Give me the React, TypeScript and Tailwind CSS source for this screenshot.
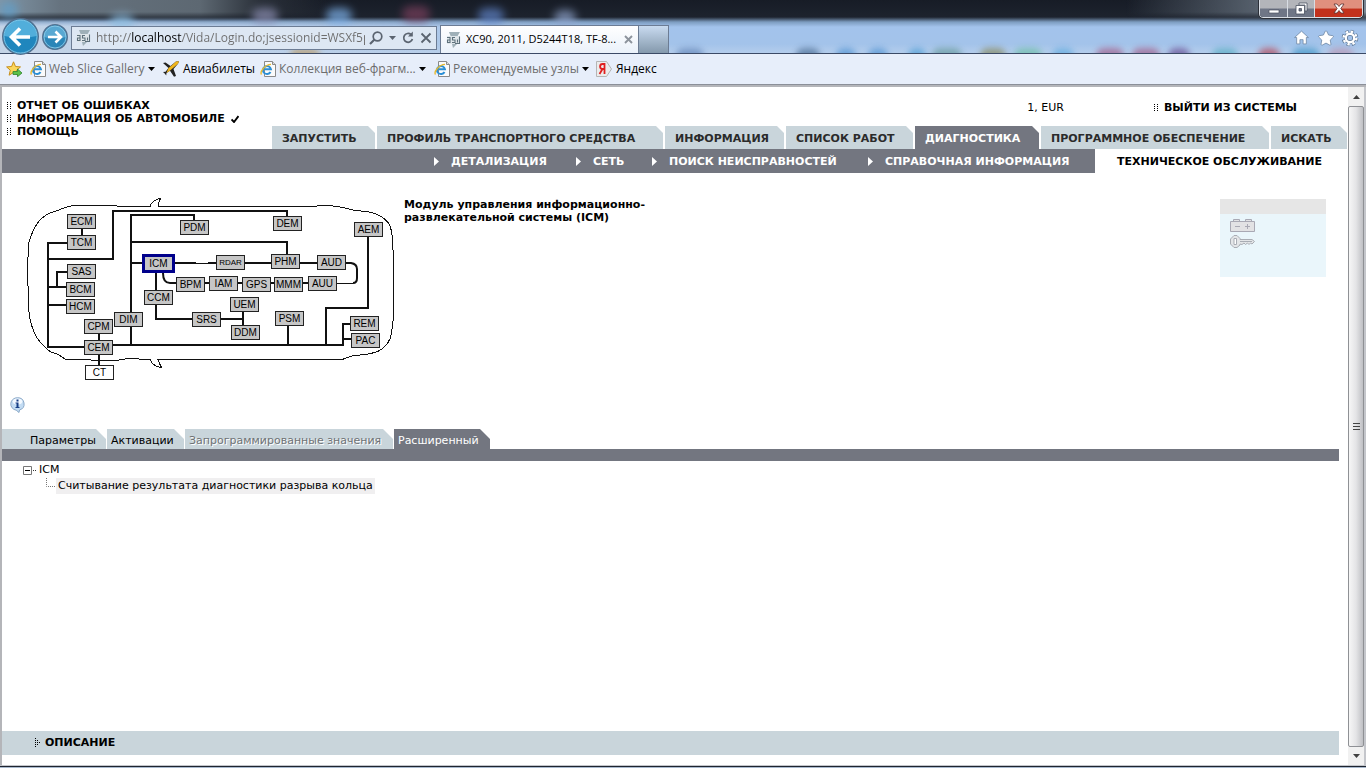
import React from "react";
import clsx from "clsx";
import { IoMdHome } from "react-icons/io";
import { FaStar } from "react-icons/fa";

const blobs = [
  { x: 0, y: 2, w: 18, color: "#5f9fcb" },
  { x: 110, y: 14, w: 24, color: "#8fbfe2" },
  { x: 252, y: 8, w: 26, color: "#8d90b4" },
  { x: 326, y: 8, w: 26, color: "#7fb4ee" },
  { x: 402, y: 6, w: 28, color: "#7a3f5c" },
  { x: 478, y: 8, w: 26, color: "#5f83c8" },
  { x: 554, y: 10, w: 22, color: "#8fa4cc" },
];

const lowBlobs = [
  { x: 290, w: 30, color: "#b9a27c" },
  { x: 676, w: 28, color: "#6d8fc0" },
  { x: 796, w: 24, color: "#56789f" },
  { x: 836, w: 20, color: "#5c9ad6" },
  { x: 868, w: 20, color: "#5c9ad6" },
  { x: 908, w: 18, color: "#5aa3d8" },
  { x: 932, w: 30, color: "#6f9fa6" },
  { x: 980, w: 26, color: "#8a9070" },
  { x: 1014, w: 28, color: "#74bfae" },
  { x: 1052, w: 22, color: "#6aaee0" },
  { x: 1096, w: 28, color: "#a06a96" },
  { x: 1132, w: 28, color: "#a06a96" },
  { x: 1168, w: 22, color: "#6e5a9c" },
  { x: 1212, w: 26, color: "#62b0c8" },
  { x: 1258, w: 22, color: "#b0566a" },
  { x: 1292, w: 28, color: "#4c9ccc" },
  { x: 1328, w: 26, color: "#b59ab8" },
];

const Caret = ({ className }: { className?: string }) => (
  <svg viewBox="0 0 7 4" className={clsx("h-1 w-[7px] shrink-0", className)}>
    <path d="M0 0h7L3.5 4z" fill="currentColor" />
  </svg>
);

const AsiIcon = () => (
  <svg viewBox="0 0 15 16" className="h-4 w-[15px] shrink-0">
    <path d="M3 0h11l-3 5H5z" fill="#9fb0b8" />
    <path d="M1 4h13v8h-4l-3 4v-4H1z" fill="#dfe6ea" />
    <path d="M6 12h5l-4 4z" fill="#9fb0b8" />
    <path
      d="M1 5.500h3v5H1.500v-2.500H4M9 5.500H6.500V8H9v2.500H6M11.500 7.500v3M13.500 4.500v7H9"
      fill="none"
      stroke="#5d707b"
      strokeWidth="1.100"
    />
  </svg>
);

const IePageIcon = () => (
  <svg viewBox="0 0 16 16" className="size-4 shrink-0">
    <path d="M4.500.5h8l3 3v12h-11z" fill="#fbfbfb" stroke="#8a8a8a" />
    <path d="M12.500.5v3h3" fill="#ddd" stroke="#8a8a8a" />
    <path
      d="M10.500 11a4 4 0 1 1 .4-2.800H4.500"
      fill="none"
      stroke="#2b8fd6"
      strokeWidth="2"
    />
    <path
      d="M1.500 13.500C-.5 11 5 3.500 11 3.300"
      fill="none"
      stroke="#e9b92c"
      strokeWidth="1.300"
    />
  </svg>
);

const AddFavoriteIcon = () => (
  <svg viewBox="0 0 17 16" className="h-4 w-[17px] shrink-0">
    <path
      d="M7.500.8l2 4.700 5 .4-3.800 3.300 1.200 5-4.400-2.700-4.400 2.700 1.200-5L.6 5.900l5-.4z"
      fill="#fbd65a"
      stroke="#c78f1c"
    />
    <path
      d="M7 10.500h4.500V8l4.500 4-4.500 3.700V13.500H7z"
      fill="#5cc24a"
      stroke="#2e8430"
      strokeWidth=".8"
    />
  </svg>
);

const PlaneIcon = () => (
  <svg viewBox="0 0 16 16" className="size-4 shrink-0">
    <path d="M0 2l2.500-.5 5 3.500L13 .5l3-.2-1 2.500L10.500 8l2.500 7-2 .8-4-6L3.500 12l-.3 2.500-1.500-2L0 11l2.500-.3L5.500 7z" fill="#222" />
    <path d="M8 5L13 .5l3-.2-1 2.500L6.500 10 3.500 12 5.500 7z" fill="#f0b51c" />
  </svg>
);

const YandexIcon = () => (
  <svg viewBox="0 0 16 16" className="size-4 shrink-0">
    <path d="M.5.5h10l5 7.500-5 7.500H.5z" fill="#ececec" stroke="#b5b5b5" />
    <path
      d="M8.500 13V3H6.500C3.300 3 3.300 8 6.500 8h2M6.500 8l-3 5"
      fill="none"
      stroke="#e02020"
      strokeWidth="1.800"
    />
  </svg>
);

const bookmarks = [
  { label: "Web Slice Gallery", icon: <IePageIcon />, menu: true, width: "w-[133px]", gap: "gap-[3px]" },
  { label: "Авиабилеты", icon: <PlaneIcon />, menu: false, width: "w-[97px]", gap: "gap-1" },
  { label: "Коллекция веб-фрагм...", icon: <IePageIcon />, menu: true, width: "w-[174px]", gap: "gap-[3px]" },
  { label: "Рекомендуемые узлы", icon: <IePageIcon />, menu: true, width: "w-[162px]", gap: "gap-[3px]" },
  { label: "Яндекс", icon: <YandexIcon />, menu: false, width: "w-[70px]", gap: "gap-1" },
];

const BrowserChrome = () => {
  return (
    <header className="font-['Open_Sans','Noto_Sans',sans-serif] text-xs">
      <div className="relative isolate border-b border-[#3b4a66]">
        {/* glass background */}
        <div className="absolute inset-0 -z-10 overflow-hidden bg-[linear-gradient(180deg,#171c26_0px,#1d232e_17px,#7d9cc0_22px,#a3c3ec_27px,#a3c3ea_44px,#b4cdec_53px)]">
          <div className="absolute inset-x-0 top-0 h-5 bg-[linear-gradient(90deg,#7f95a6_0px,#66737f_60px,#5d6872_200px,#2a3039_260px,transparent_330px,transparent_calc(100%-240px),#56606c_calc(100%-110px),#7b8794_100%)] mask-b-from-60%" />
          <div className="absolute top-[20px] left-0 h-[33px] w-[640px] bg-[linear-gradient(90deg,#c3d3e6,transparent)] mask-t-from-80%" />
          {blobs.map((b) => (
            <span
              key={b.x}
              className="absolute h-4 rounded-full opacity-70 blur-[4px]"
              style={{ left: b.x, top: b.y, width: b.w, background: b.color }}
            />
          ))}
          {lowBlobs.map((b) => (
            <span
              key={b.x}
              className="absolute top-[48px] h-4 rounded-t-lg opacity-80 blur-[3px]"
              style={{ left: b.x, width: b.w, background: b.color }}
            />
          ))}
        </div>

        <div className="flex h-5 items-start justify-end pr-[3px]">
          <div className="flex h-[18px] overflow-hidden rounded-b-[4px] border border-t-0 border-[#d8dde4] outline outline-[#2c3038]">
            <button aria-label="Свернуть" className="flex w-7 items-center justify-center border-r border-[#d8dde4] bg-linear-to-b from-[#b3b5ba] from-45% to-[#6f7686] to-55%">
              <svg viewBox="0 0 12 12" className="mt-1 size-3">
                <path d="M1 5h10v3H1z" fill="#fff" stroke="#4a5260" strokeWidth=".7" />
              </svg>
            </button>
            <button aria-label="Восстановить" className="flex w-[27px] items-center justify-center border-r border-[#d8dde4] bg-linear-to-b from-[#b3b5ba] from-45% to-[#6f7686] to-55%">
              <svg viewBox="0 0 13 13" className="size-[13px]">
                <path d="M4 1h8v8h-2V3H4z" fill="#fff" stroke="#4a5260" strokeWidth=".8" />
                <path d="M1 3.500h8.500V12H1zM4 6.500V9h2.500V6.500z" fill="#fff" fillRule="evenodd" stroke="#4a5260" strokeWidth=".8" />
              </svg>
            </button>
            <button aria-label="Закрыть" className="flex w-[47px] items-center justify-center bg-linear-to-b from-[#e0907e] from-45% to-[#c2311c] to-55%">
              <svg viewBox="0 0 12 11" className="h-[11px] w-3">
                <path d="M1 1h3l2 2.500L8 1h3L7.800 5.500 11 10H8L6 7.500 4 10H1l3.200-4.500z" fill="#fff" stroke="#5a3030" strokeWidth=".8" />
              </svg>
            </button>
          </div>
        </div>

        <div className="flex h-[33px] items-center">
          <div className="flex w-[71px] items-center gap-[3px] pl-[2px]">
            <button aria-label="Назад" className="shrink-0">
              <svg viewBox="0 0 37 37" className="size-[37px]">
                <circle cx="18.500" cy="18.500" r="17.800" fill="#1f86bd" stroke="#54718f" strokeWidth="1.400" />
                <path d="M2.500 18a16 16 0 0 1 32 0q-16 4-32 0z" fill="#51aedb" />
                <circle cx="18.500" cy="18.500" r="16.500" fill="none" stroke="#8fd0ee" strokeWidth=".8" />
                <path d="M28 19H9.500M18 10.500L9.500 19l8.500 8.500" fill="none" stroke="#fff" strokeWidth="3.600" />
              </svg>
            </button>
            <button aria-label="Вперед" className="shrink-0">
              <svg viewBox="0 0 26 26" className="size-[26px]">
                <circle cx="13" cy="13" r="12.300" fill="#2b86b8" stroke="#54718f" strokeWidth="1.300" />
                <path d="M2 13a11 11 0 0 1 22 0q-11 3-22 0z" fill="#58a8d2" />
                <circle cx="13" cy="13" r="11" fill="none" stroke="#9bd3ec" strokeWidth=".8" />
                <path d="M6 13h13M13.500 7.500L19 13l-5.500 5.500" fill="none" stroke="#fff" strokeWidth="2.600" />
              </svg>
            </button>
          </div>

          <div className="mt-[2px] flex h-6 w-[366px] items-center border border-[#6c7c94] bg-[#dde7f3] pr-1 pl-1">
            <AsiIcon />
            <input
              aria-label="Адрес"
              readOnly
              value="http://localhost/Vida/Login.do;jsessionid=WSXf5p8E"
              className="ml-[5px] w-[269px] bg-[linear-gradient(90deg,#6d6d6d_36px,#000_36px,#000_86px,#6d6d6d_86px)] bg-clip-text text-transparent outline-none"
            />
            <div className="flex flex-1 items-center justify-between pl-1 text-[#5b6470]">
              <button aria-label="Поиск">
                <svg viewBox="0 0 14 14" className="size-[14px]">
                  <circle cx="8.500" cy="5.500" r="4.300" fill="none" stroke="currentColor" strokeWidth="1.700" />
                  <path d="M5.500 8.500L1 13" stroke="currentColor" strokeWidth="2.200" />
                </svg>
              </button>
              <button aria-label="Список адресов">
                <Caret />
              </button>
              <button aria-label="Обновить">
                <svg viewBox="0 0 12 13" className="h-[13px] w-3">
                  <path d="M9 3.500A4.400 4.400 0 1 0 10.400 8" fill="none" stroke="currentColor" strokeWidth="1.700" />
                  <path d="M10.800.5v5H6z" fill="currentColor" />
                </svg>
              </button>
              <button aria-label="Остановить">
                <svg viewBox="0 0 12 12" className="size-3">
                  <path d="M1.500 1.500l9 9M10.500 1.500l-9 9" stroke="currentColor" strokeWidth="1.800" />
                </svg>
              </button>
            </div>
          </div>

          <div className="ml-[3px] flex h-7 w-[199px] items-center self-end border border-b-0 border-[#6c7c94] bg-linear-to-b from-white to-[#eaf1fa] pr-[5px] pl-[5px]">
            <AsiIcon />
            <span className="ml-[5px] flex-1 text-[11px] whitespace-nowrap">XC90, 2011, D5244T18, TF-8...</span>
            <button aria-label="Закрыть вкладку" className="text-[#8c939c]">
              <svg viewBox="0 0 9 9" className="size-[9px]">
                <path d="M1 1l7 7M8 1L1 8" stroke="currentColor" strokeWidth="1.900" />
              </svg>
            </button>
          </div>
          <button aria-label="Новая вкладка" className="h-7 w-[30px] self-end border border-b-0 border-l-0 border-[#6c7c94] bg-linear-to-b from-[#c9dbf0] to-[#8499ac]" />

          <div className="mt-[2px] ml-auto flex items-center gap-[8px] pr-[8px] text-white">
            <button aria-label="Домой">
              <IoMdHome className="size-[17px] overflow-visible [stroke:#5d7796] [stroke-width:20]" />
            </button>
            <button aria-label="Избранное">
              <FaStar className="size-4 overflow-visible [stroke:#5d7796] [stroke-width:24]" />
            </button>
            <button aria-label="Сервис">
              <svg viewBox="0 0 17 17" className="size-4 overflow-visible">
                <circle cx="8.500" cy="8.500" r="6.900" fill="none" stroke="#5d7796" strokeWidth="3.800" strokeDasharray="3.200 2.200" />
                <circle cx="8.500" cy="8.500" r="4.500" fill="none" stroke="#5d7796" strokeWidth="4" />
                <circle cx="8.500" cy="8.500" r="6.800" fill="none" stroke="#fff" strokeWidth="2.500" strokeDasharray="2.500 2.840" />
                <circle cx="8.500" cy="8.500" r="4.500" fill="none" stroke="#fff" strokeWidth="2.500" />
              </svg>
            </button>
          </div>
        </div>
      </div>

      {/* favorites bar */}
      <nav className="flex h-[31px] items-center border-b border-[#8b8f98] bg-[#e7eefa] pl-[6px]">
        <button aria-label="Добавить в избранное" className="w-6">
          <AddFavoriteIcon />
        </button>
        {bookmarks.map((b) => (
          <a
            key={b.label}
            href="#"
            className={clsx("flex items-center whitespace-nowrap", b.gap, b.width, b.menu ? "text-[#6d6d6d]" : "text-black")}
          >
            {b.icon}
            {b.label}
            {b.menu && <Caret className="text-black" />}
          </a>
        ))}
      </nav>
    </header>
  );
};

const Dots = () => (
  <svg viewBox="0 0 4 8" className="h-2 w-1 shrink-0">
    <path d="M0 .5h1m2 0h1M0 2.500h1m2 0h1M0 4.500h1m2 0h1M0 6.500h1m2 0h1" stroke="#000" />
  </svg>
);

const mainTabs = [
  { label: "ЗАПУСТИТЬ", width: "w-[103px]" },
  { label: "ПРОФИЛЬ ТРАНСПОРТНОГО СРЕДСТВА", width: "w-[286px]" },
  { label: "ИНФОРМАЦИЯ", width: "w-[119px]" },
  { label: "СПИСОК РАБОТ", width: "w-[127px]" },
  { label: "ДИАГНОСТИКА", width: "w-[124px]", active: true },
  { label: "ПРОГРАММНОЕ ОБЕСПЕЧЕНИЕ", width: "w-[228px]" },
  { label: "ИСКАТЬ", width: "w-[76px]" },
];

const subTabs = [
  { label: "ДЕТАЛИЗАЦИЯ", width: "w-[142px]" },
  { label: "СЕТЬ", width: "w-[76px]" },
  { label: "ПОИСК НЕИСПРАВНОСТЕЙ", width: "w-[216px]" },
  { label: "СПРАВОЧНАЯ ИНФОРМАЦИЯ", width: "w-[227px]" },
];

const AppHeader = () => {
  return (
    <div className="font-bold">
      <div className="flex h-[62px] justify-between pr-px">
        <ul className="pt-3 pl-[5px] leading-[13px]">
          <li>
            <a href="#" className="flex items-center gap-[6px]"><Dots />ОТЧЕТ ОБ ОШИБКАХ</a>
          </li>
          <li>
            <a href="#" className="flex items-center gap-[6px] whitespace-nowrap">
              <Dots />ИНФОРМАЦИЯ ОБ АВТОМОБИЛЕ
              <svg viewBox="0 0 8 8" className="size-2">
                <path d="M.5 4.500L3 7l4.500-6" fill="none" stroke="#000" strokeWidth="1.900" />
              </svg>
            </a>
          </li>
          <li>
            <a href="#" className="flex items-center gap-[6px]"><Dots />ПОМОЩЬ</a>
          </li>
        </ul>
        <div className="flex flex-col justify-between">
          <div className="flex items-center justify-end gap-[90px] pt-[14px] pr-[50px]">
            <span className="font-normal">1, EUR</span>
            <a href="#" className="flex items-center gap-[6px]"><Dots />ВЫЙТИ ИЗ СИСТЕМЫ</a>
          </div>
          <nav className="flex gap-[2px]">
            {mainTabs.map((tab) => (
              <a
                key={tab.label}
                href="#"
                className={clsx(
                  "flex h-[23px] items-center pt-[2px] pl-[10px] whitespace-nowrap [clip-path:polygon(0_0,calc(100%-7px)_0,100%_7px,100%_100%,0_100%)]",
                  tab.width,
                  tab.active ? "bg-[#737680] text-white" : "bg-[#c9d5db] text-[#2b2b2b]"
                )}
              >
                {tab.label}
              </a>
            ))}
          </nav>
        </div>
      </div>
      <nav className="flex h-6 items-stretch">
        <div className="flex flex-1 justify-end bg-[#737680] text-white">
          {subTabs.map((tab) => (
            <a key={tab.label} href="#" className={clsx("flex items-center gap-3 whitespace-nowrap", tab.width)}>
              <svg viewBox="0 0 5 9" className="h-[9px] w-[5px]">
                <path d="M0 0l5 4.500L0 9z" fill="#fff" />
              </svg>
              {tab.label}
            </a>
          ))}
        </div>
        <a href="#" className="flex w-[253px] items-center pl-[22px] whitespace-nowrap">
          ТЕХНИЧЕСКОЕ ОБСЛУЖИВАНИЕ
        </a>
      </nav>
    </div>
  );
};

// positions inside the car outline
const modules = [
  { name: "ECM", x: 47, y: 24 },
  { name: "TCM", x: 47, y: 45 },
  { name: "SAS", x: 47, y: 74 },
  { name: "BCM", x: 46, y: 92 },
  { name: "HCM", x: 46, y: 109 },
  { name: "CPM", x: 64, y: 129 },
  { name: "CEM", x: 64, y: 150 },
  { name: "CT", x: 65, y: 175 },
  { name: "DIM", x: 94, y: 122 },
  { name: "ICM", x: 122, y: 64 },
  { name: "CCM", x: 124, y: 100 },
  { name: "PDM", x: 160, y: 30 },
  { name: "BPM", x: 156, y: 87 },
  { name: "SRS", x: 172, y: 122 },
  { name: "RDAR", x: 196, y: 65 },
  { name: "PHM", x: 251, y: 64 },
  { name: "AUD", x: 297, y: 65 },
  { name: "IAM", x: 189, y: 86 },
  { name: "GPS", x: 222, y: 87 },
  { name: "MMM", x: 254, y: 87 },
  { name: "AUU", x: 288, y: 86 },
  { name: "UEM", x: 210, y: 107 },
  { name: "DDM", x: 211, y: 135 },
  { name: "PSM", x: 255, y: 121 },
  { name: "DEM", x: 253, y: 26 },
  { name: "AEM", x: 334, y: 32 },
  { name: "REM", x: 330, y: 126 },
  { name: "PAC", x: 331, y: 143 },
];

const NetworkDiagram = () => {
  return (
    <div className="relative h-[195px] w-[380px] shrink-0 font-['Liberation_Sans',Arial,sans-serif] text-[10px]">
      <svg viewBox="20 190 380 195" className="size-full" fill="none" stroke="#111">
        <path
          shapeRendering="crispEdges"
          d="M68 206.500L75 205.500H110L124 206.500H150C151 203 155 199 160.500 198.500C159 201 158 204 158.500 206.500H316L318 205.500H330L343 207.500L355 210.500L367 211.500Q385 215 390 226Q393 234 393 250L394 310Q392 334 390 339Q384 352 368 354L352 356L342 359.500H158C159 361 159 363 161.500 367.500C156 367 152 364 150 359.500L128 358.500L116 360.500L66 359.500L58 354.500L50 351.500Q38 342 34 332Q29 320 28.500 305L27.500 265L29 242Q33 228 40 220Q47 213 56 211Z"
        />
        <g strokeWidth="2">
          <path d="M82 229v6M67 243H48v104h36M48 259h65v-48h174v5M67 272H57v15M48 287h18M48 305h18M99 334v6M99 355v10" />
          <path d="M113 345h230v-21h7M343 339h8M131 345V215h63v5M131 242h156v12M131 263h11M156 273v17M156 305v14h36M221 319h22M243 312v13M288 326v19M368 237v71h-42v37" />
          <path d="M175 263h21M208 263h8M245 263h26M300 263h17M346 263h5q6 1 6 6v9q0 5-4 5M163 273q0 10 7 10h6M205 283h4M238 283h4M271 283h4M303 283h5" />
        </g>
        <path d="M195 263.500h14M337 283.500h16" />
      </svg>
      {modules.map((m) => (
        <button
          key={m.name}
          style={{ left: m.x, top: m.y }}
          className={clsx(
            "absolute flex items-center justify-center",
            m.name === "ICM"
              ? "h-[19px] w-[33px] border-[3px] border-[#00008b]"
              : "h-[15px] w-[29px] border border-[#222]",
            m.name === "CT" ? "bg-white" : "bg-[#c6c6c6]",
            m.name === "RDAR" && "text-[8px]"
          )}
        >
          {m.name}
        </button>
      ))}
    </div>
  );
};

const detailTabs = [
  { label: "Параметры", className: "w-[104px] pl-7 bg-[#c9d5db] text-black" },
  { label: "Активации", className: "w-[77px] pl-1 bg-[#c9d5db] text-black" },
  { label: "Запрограммированные значения", className: "w-[208px] pl-1 bg-[#c9d5db] text-[#6f7376] [text-shadow:1px_1px_0_#fff]" },
  { label: "Расширенный", className: "w-24 pl-1 bg-[#737680] text-white" },
];

const Scrollbar = () => (
  <div className="flex w-[18px] flex-col items-center border-r-2 border-[#c4c6cb] bg-[#f1f1f1]">
    <button aria-label="Вверх" className="flex h-[19px] items-center">
      <Caret className="rotate-180 text-[#404040]" />
    </button>
    <div className="flex w-full flex-1 items-center justify-center rounded-[2px] border border-[#8f9195] bg-linear-to-r from-[#f6f6f6] via-[#e4e4e6] to-[#bfc0c4]">
      <svg viewBox="0 0 7 8" className="h-2 w-[7px]">
        <path d="M0 .5h7M0 3.500h7M0 6.500h7" stroke="#444" />
      </svg>
    </div>
    <button aria-label="Вниз" className="flex h-[18px] items-center">
      <Caret className="text-[#404040]" />
    </button>
  </div>
);

const App = () => {
  return (
    <div className="flex h-screen flex-col overflow-hidden bg-white text-black">
      <BrowserChrome />
      <div className="flex min-h-0 flex-1 border-t-2 border-l-2 border-[#b4b5b9]">
        <main className="flex min-w-0 flex-1 flex-col font-['DejaVu_Sans',Verdana,sans-serif] text-[11px] leading-[13px]">
          <AppHeader />

          <section className="flex items-start pt-[17px] pl-[18px]">
            <NetworkDiagram />
            <h1 className="w-[280px] pt-2 pl-1 font-bold">
              Модуль управления информационно-развлекательной системы (ICM)
            </h1>
            <div className="mt-[9px] mr-[22px] ml-auto h-[78px] w-[106px] border-t-[15px] border-[#e6e6e6] bg-[#eaf6fb] pt-[5px] pl-[10px]">
              <svg viewBox="0 0 25 13" className="h-[13px] w-[25px]" fill="#e2e2e4" stroke="#a9a9b4">
                <path d="M3.500.5h6v2h-6zM15.500.5h6v2h-6zM.5 2.500h24v10H.5z" />
                <path d="M5 7.500h5M15 7.500h5M17.500 5v5" />
              </svg>
              <svg viewBox="0 0 25 13" className="mt-[3px] h-[13px] w-[25px]" fill="#e4e6e8" stroke="#a9adb4">
                <path d="M4 .5h3l3 3v1h12l2.500 2-2.500 2.500-1.500-1-1.500 1.500-1.500-1.500-2 1.500-1.500-1.500-2 1.500-2-.5v1l-3 2.500H4L.5 9V4z" />
                <path d="M4 3.500h2.500v6H4zM10 6.500h12" fill="#fff" />
              </svg>
            </div>
          </section>

          <button aria-label="Справка" className="mt-3 ml-2 self-start">
            <svg viewBox="0 0 15 16" className="h-4 w-[15px]">
              <path d="M7.500.7a6.600 6.300 0 0 1 2 12.300l-.5 2.500-2.800-2.300A6.600 6.300 0 0 1 7.500.7z" fill="#c3dcf3" stroke="#8ba9c8" />
              <ellipse cx="7.500" cy="4.500" rx="4.800" ry="3" fill="#f3f9ff" />
              <path d="M6.500 2.500h2v2h-2zM5.500 5.500h3v4.500h1v1h-4v-1h1V6.500h-1z" fill="#173f86" />
            </svg>
          </button>

          <nav className="mt-4 flex gap-px">
            {detailTabs.map((tab) => (
              <a
                key={tab.label}
                href="#"
                className={clsx(
                  "flex h-5 items-center pt-[2px] whitespace-nowrap [clip-path:polygon(0_0,calc(100%-10px)_0,100%_10px,100%_100%,0_100%)]",
                  tab.className
                )}
              >
                {tab.label}
              </a>
            ))}
          </nav>
          <div className="mr-[9px] h-3 bg-[#737680]" />

          <ul className="flex-1 pt-px pl-[21px]">
            <li className="leading-4">
              <div className="flex items-center">
                <button aria-label="Свернуть ветвь" className="mr-[3px]">
                  <svg viewBox="0 0 13 9" className="h-[9px] w-[13px]" fill="none" stroke="#333">
                    <path d="M.5.5h8v8h-8z" stroke="#777" />
                    <path d="M2 4.500h5" stroke="#000" />
                    <path d="M10 4.500h3" strokeDasharray="1 1" />
                  </svg>
                </button>
                ICM
              </div>
              <div className="flex items-center pl-[23px]">
                <svg viewBox="0 0 9 16" className="h-4 w-[9px]" fill="none" stroke="#777">
                  <path d="M.5 0v8.500H9" strokeDasharray="1 1" />
                </svg>
                <a href="#" className="ml-px bg-[#f0eff0] px-[2px] whitespace-nowrap">
                  Считывание результата диагностики разрыва кольца
                </a>
              </div>
            </li>
          </ul>

          <button className="mr-[9px] mb-[10px] flex h-6 items-center gap-[5px] bg-[#c9d5db] pb-[2px] pl-[33px] font-bold">
            <svg viewBox="0 0 5 9" className="h-[9px] w-[5px]">
              <path d="M0 .5h1M0 2.500h1m1 0h1M0 4.500h1m1 0h1m1 0h1M0 6.500h1m1 0h1M0 8.500h1" stroke="#000" />
            </svg>
            ОПИСАНИЕ
          </button>
        </main>
        <Scrollbar />
      </div>
      <footer className="h-[3px] border-t border-[#c4c6cb] bg-linear-to-b from-[#1d2430] from-50% to-[#a9b9cd] to-50%" />
    </div>
  );
};

export default App;
